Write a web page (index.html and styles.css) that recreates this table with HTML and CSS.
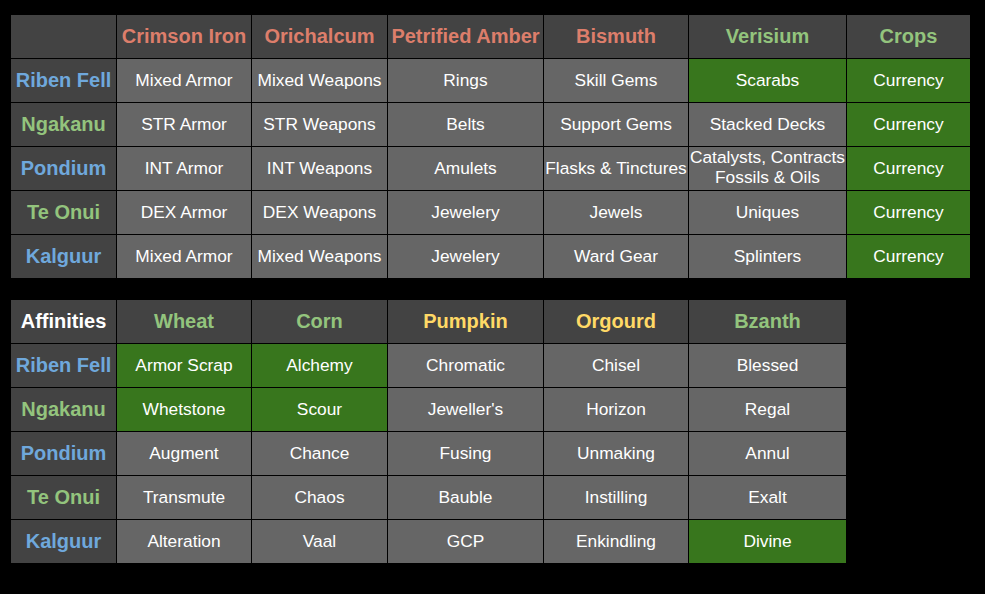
FILE: index.html
```html
<!DOCTYPE html>
<html>
<head>
<meta charset="utf-8">
<link rel="stylesheet" href="styles.css">
</head>
<body>
<div class="sheet sheet-main">
  <div class="cell hd"></div>
  <div class="cell hd red">Crimson Iron</div>
  <div class="cell hd red">Orichalcum</div>
  <div class="cell hd red">Petrified Amber</div>
  <div class="cell hd red">Bismuth</div>
  <div class="cell hd green">Verisium</div>
  <div class="cell hd green">Crops</div>

  <div class="cell hd blue">Riben Fell</div>
  <div class="cell">Mixed Armor</div>
  <div class="cell">Mixed Weapons</div>
  <div class="cell">Rings</div>
  <div class="cell">Skill Gems</div>
  <div class="cell g">Scarabs</div>
  <div class="cell g">Currency</div>

  <div class="cell hd green">Ngakanu</div>
  <div class="cell">STR Armor</div>
  <div class="cell">STR Weapons</div>
  <div class="cell">Belts</div>
  <div class="cell">Support Gems</div>
  <div class="cell">Stacked Decks</div>
  <div class="cell g">Currency</div>

  <div class="cell hd blue">Pondium</div>
  <div class="cell">INT Armor</div>
  <div class="cell">INT Weapons</div>
  <div class="cell">Amulets</div>
  <div class="cell">Flasks &amp; Tinctures</div>
  <div class="cell wrap">Catalysts, Contracts<br>Fossils &amp; Oils</div>
  <div class="cell g">Currency</div>

  <div class="cell hd green">Te Onui</div>
  <div class="cell">DEX Armor</div>
  <div class="cell">DEX Weapons</div>
  <div class="cell">Jewelery</div>
  <div class="cell">Jewels</div>
  <div class="cell">Uniques</div>
  <div class="cell g">Currency</div>

  <div class="cell hd blue">Kalguur</div>
  <div class="cell">Mixed Armor</div>
  <div class="cell">Mixed Weapons</div>
  <div class="cell">Jewelery</div>
  <div class="cell">Ward Gear</div>
  <div class="cell">Splinters</div>
  <div class="cell g">Currency</div>
</div>

<div class="sheet sheet-aff">
  <div class="cell hd white">Affinities</div>
  <div class="cell hd green">Wheat</div>
  <div class="cell hd green">Corn</div>
  <div class="cell hd yellow">Pumpkin</div>
  <div class="cell hd yellow">Orgourd</div>
  <div class="cell hd green">Bzanth</div>

  <div class="cell hd blue">Riben Fell</div>
  <div class="cell g">Armor Scrap</div>
  <div class="cell g">Alchemy</div>
  <div class="cell">Chromatic</div>
  <div class="cell">Chisel</div>
  <div class="cell">Blessed</div>

  <div class="cell hd green">Ngakanu</div>
  <div class="cell g">Whetstone</div>
  <div class="cell g">Scour</div>
  <div class="cell">Jeweller's</div>
  <div class="cell">Horizon</div>
  <div class="cell">Regal</div>

  <div class="cell hd blue">Pondium</div>
  <div class="cell">Augment</div>
  <div class="cell">Chance</div>
  <div class="cell">Fusing</div>
  <div class="cell">Unmaking</div>
  <div class="cell">Annul</div>

  <div class="cell hd green">Te Onui</div>
  <div class="cell">Transmute</div>
  <div class="cell">Chaos</div>
  <div class="cell">Bauble</div>
  <div class="cell">Instilling</div>
  <div class="cell">Exalt</div>

  <div class="cell hd blue">Kalguur</div>
  <div class="cell">Alteration</div>
  <div class="cell">Vaal</div>
  <div class="cell">GCP</div>
  <div class="cell">Enkindling</div>
  <div class="cell g">Divine</div>
</div>
</body>
</html>
```
FILE: styles.css
```css
html, body {
  background: #000;
}
body {
  margin: 15px 0 0 11px;
  font-family: "Liberation Sans", Arial, sans-serif;
}
.sheet {
  display: grid;
  gap: 1px;
  background: #000;
  grid-auto-rows: 43px;
  width: max-content;
}
.sheet-main {
  grid-template-columns: 105px 134px 135px 155px 144px 157px 123px;
}
.sheet-aff {
  margin-top: 22px;
  grid-template-columns: 105px 134px 135px 155px 144px 157px;
}
.cell {
  background: #666666;
  color: #ffffff;
  font-size: 17.33px;
  display: flex;
  align-items: center;
  justify-content: center;
  text-align: center;
  white-space: nowrap;
  overflow: hidden;
  line-height: 20px;
  padding-bottom: 2px;
}
.cell.wrap {
  line-height: 20px;
  padding-bottom: 3px;
}
.cell.g {
  background: #38761d;
}
.cell.hd {
  background: #434343;
  font-weight: bold;
  font-size: 20px;
  padding-bottom: 2px;
}
.red { color: #dd7e6b; }
.green { color: #93c47d; }
.blue { color: #6fa8dc; }
.yellow { color: #ffd966; }
.white { color: #ffffff; }
```
